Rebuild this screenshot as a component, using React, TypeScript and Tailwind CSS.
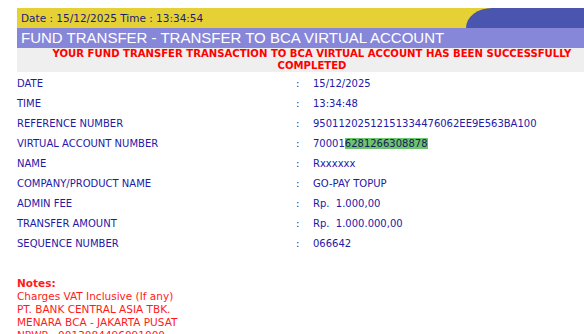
const rows: [string, string][] = [
  ["DATE", "15/12/2025"],
  ["TIME", "13:34:48"],
  ["REFERENCE NUMBER", "95011202512151334476062EE9E563BA100"],
  ["VIRTUAL ACCOUNT NUMBER", ""],
  ["NAME", "Rxxxxxx"],
  ["COMPANY/PRODUCT NAME", "GO-PAY TOPUP"],
  ["ADMIN FEE", "Rp.  1.000,00"],
  ["TRANSFER AMOUNT", "Rp.  1.000.000,00"],
  ["SEQUENCE NUMBER", "066642"],
];

export default function App() {
  return (
    <div className="w-[584px] h-[334px] overflow-hidden bg-white font-['DejaVu_Sans',Verdana,sans-serif]">
      <div className="ml-[17px] mt-[8px] w-[590px]">
        <div className="flex h-[20px] bg-[#e5d136]">
          <div className="pl-1 text-[10.5px] leading-[20px] text-[#1c1c78]">
            Date : 15/12/2025 Time : 13:34:54
          </div>
          <div className="ml-auto w-[141px] rounded-tl-[26px_20px] bg-[#4a55b0]" />
        </div>
        <div className="h-[20px] bg-[#8787d9] pl-1 font-['Liberation_Sans',Arial,sans-serif] text-[15px] leading-[20px] text-white">
          FUND TRANSFER - TRANSFER TO BCA VIRTUAL ACCOUNT
        </div>
        <div className="h-[24px] bg-[#efefef] text-center text-[10.1px] font-bold leading-[12px] text-[#ff0000]">
          YOUR FUND TRANSFER TRANSACTION TO BCA VIRTUAL ACCOUNT HAS BEEN SUCCESSFULLY
          <br />
          COMPLETED
        </div>
        <div className="pt-px text-[10px] text-[#2318a8]">
          {rows.map(([label, value]) => (
            <div key={label} className="flex h-[20px] items-center">
              <div className="w-[279px]">{label}</div>
              <div className="w-[17px]">:</div>
              <div>
                {label === "VIRTUAL ACCOUNT NUMBER" ? (
                  <>
                    70001
                    <span className="bg-[#6cc46c] text-[#1a1a60]">6281266308878</span>
                  </>
                ) : (
                  <span className="whitespace-pre">{value}</span>
                )}
              </div>
            </div>
          ))}
        </div>
        <div className="mt-[24px] text-[10.5px] leading-[13px] text-[#ff1a1a]">
          <div className="font-bold">Notes:</div>
          <div>Charges VAT Inclusive (If any)</div>
          <div>PT. BANK CENTRAL ASIA TBK.</div>
          <div>MENARA BCA - JAKARTA PUSAT</div>
          <div>NPWP : 0013084496091000</div>
        </div>
      </div>
    </div>
  );
}
